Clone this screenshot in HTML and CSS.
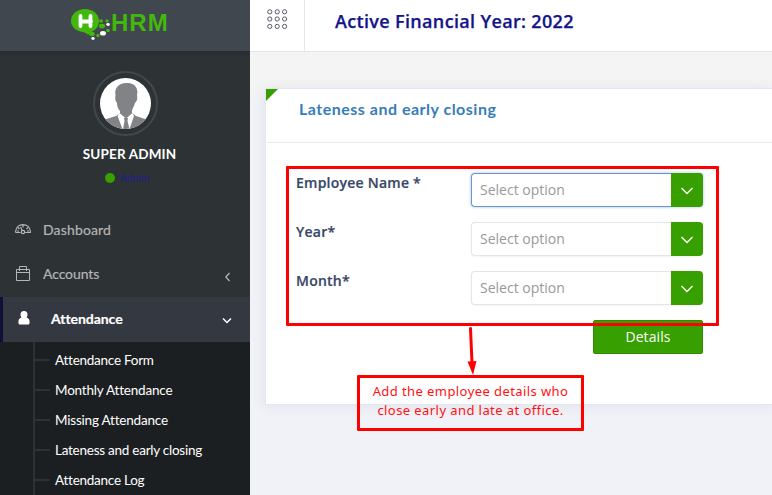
FILE: index.html
```html
<!DOCTYPE html>
<html lang="en">
<head>
<meta charset="utf-8">
<title>HRM</title>
<link rel="stylesheet" href="styles.css">
</head>
<body>
<div class="app">
  <aside class="sidebar">
    <div class="brand">
      <svg class="mark" width="42" height="34" viewBox="0 0 42 34">
        <path d="M15 1C23 1 29 6 29 13C29 18 26 22 21 24L18 27C17 25 15 25 13 24C6 23 1 19 1 13C1 6 7 1 15 1Z" fill="#43b80c"/>
        <path d="M10.5 8V18M20.5 8V18M10.5 13.500H21" stroke="#fff" stroke-width="3.800" stroke-linecap="round" fill="none"/>
        <g fill="#43b80c"><ellipse cx="31" cy="13" rx="2" ry="1.7"/><ellipse cx="37" cy="13" rx="1.7" ry="1.4"/><ellipse cx="32" cy="18" rx="3" ry="2.3"/><ellipse cx="22" cy="26" rx="2.8" ry="2.2"/><circle cx="28" cy="27.500" r="1.7"/><circle cx="38" cy="22.500" r="1.8"/></g>
        <g fill="#fff"><ellipse cx="38" cy="16.500" rx="1.800" ry="1.400"/><ellipse cx="33" cy="25.200" rx="3" ry="2.300"/><ellipse cx="23" cy="30.500" rx="1.700" ry="1.400"/></g>
      </svg>
      <span class="wordmark">HRM</span>
    </div>
    <div class="user">
      <div class="avatar">
        <svg width="51" height="51" viewBox="0 0 51 51">
          <defs><clipPath id="round"><circle cx="25.500" cy="25.500" r="25.500"/></clipPath></defs>
          <g clip-path="url(#round)">
            <rect width="51" height="51" fill="#fff"/>
            <path d="M26 5C34 4 39 10 37 17C38 22 36 24 35 25C34 29 32 31 32 33V35L36 38L51 43V51H0V43L16 38L20 35V33C18 31 17 28 17 25C15 23 15 20 15.500 17C14 10 19 5 26 5Z" fill="#808487"/>
            <path d="M19.500 35L26 40.500L32.500 35L34 38L29.500 51H22.500L17.500 38Z" fill="#fff"/>
            <path d="M24 40H28L27.500 43L29.500 51H23L24.500 43Z" fill="#808487"/>
          </g>
        </svg>
      </div>
      <div class="name">SUPER ADMIN</div>
      <div class="status"><i class="dot"></i><span>Admin</span></div>
    </div>
    <nav>
      <a class="item">
        <svg class="icon dash" width="16" height="16" viewBox="0 0 16 16" fill="none" stroke="#b4b6b7" stroke-width="1.200"><path d="M.6 9.500V8.500C1 4.500 4 1.600 8 1.600S15 4.500 15.400 8.500V9.500H10.200M.6 9.500H5.500M8 2V4.500M3 4.500L4.500 6M13 4.500L11.500 6M2 8H4M12 8H14M5.500 4L7.500 8"/><circle cx="8" cy="9" r="1.700"/></svg>
        <span class="w-dash">Dashboard</span>
      </a>
      <a class="item">
        <svg class="icon" width="16" height="16" viewBox="0 0 16 16" fill="none" stroke="#b4b6b7"><path d="M1.500 3.500H14.500V14.500H1.500ZM1.500 6.500H14.500M4.500 5V.500H11.500V5"/></svg>
        <span class="w-acc">Accounts</span>
        <svg class="chev" width="8" height="10" viewBox="0 0 8 10" fill="none" stroke="#b4b6b7" stroke-width="1.300"><path d="M4.500 1L.800 5L4.500 9"/></svg>
      </a>
      <a class="item active">
        <svg class="icon" width="12" height="14" viewBox="0 0 12 14" fill="#fff"><path d="M6 0C8.500 0 9.500 1.600 9.500 3.500C9.500 5.200 9 6 8.500 6.500C11 7.200 11.600 9 11.600 11C11.600 13 11 13.500 10 13.500H2C1 13.500 .4 13 .4 11C.4 9 1 7.200 3.500 6.500C3 6 2.500 5.200 2.500 3.500C2.500 1.600 3.500 0 6 0Z"/></svg>
        <span class="w-att">Attendance</span>
        <svg class="chev" width="10" height="8" viewBox="0 0 10 8" fill="none" stroke="#fff" stroke-width="1.500"><path d="M1 1.500L5 5.500L9 1.500"/></svg>
      </a>
      <ul class="sub">
        <li class="s1">Attendance Form</li>
        <li class="s2">Monthly Attendance</li>
        <li class="s3">Missing Attendance</li>
        <li class="s4">Lateness and early closing</li>
        <li class="s5">Attendance Log</li>
      </ul>
    </nav>
  </aside>
  <div class="main">
    <header class="top">
      <div class="toggle">
        <svg width="21" height="21" viewBox="0 0 21 21" fill="none" stroke="#5b5868"><g id="r"><circle cx="2.800" cy="2.800" r="2.100"/><circle cx="10.200" cy="2.800" r="2.100"/><circle cx="17.600" cy="2.800" r="2.100"/></g><use href="#r" y="7.200"/><use href="#r" y="14.600"/></svg>
      </div>
      <h1>Active Financial Year: 2022</h1>
    </header>
    <main class="content">
      <section class="card">
        <header class="card-head"><h2>Lateness and early closing</h2></header>
        <div class="form">
          <div class="row"><label>Employee Name *</label><div class="select focus"><span>Select option</span><b><svg width="14" height="10" viewBox="0 0 14 10" fill="none" stroke="#fff" stroke-width="1.400"><path d="M1.500 2L7 7.500L12.500 2"/></svg></b></div></div>
          <div class="row"><label>Year*</label><div class="select"><span>Select option</span><b><svg width="14" height="10" viewBox="0 0 14 10" fill="none" stroke="#fff" stroke-width="1.400"><path d="M1.500 2L7 7.500L12.500 2"/></svg></b></div></div>
          <div class="row"><label>Month*</label><div class="select"><span>Select option</span><b><svg width="14" height="10" viewBox="0 0 14 10" fill="none" stroke="#fff" stroke-width="1.400"><path d="M1.500 2L7 7.500L12.500 2"/></svg></b></div></div>
          <button class="details">Details</button>
        </div>
      </section>
    </main>
  </div>
</div>
<div class="frame"></div>
<svg class="arrow" width="12" height="50" viewBox="0 0 12 50"><path d="M3.500 2.500L5 37" stroke="#f00" stroke-width="3" stroke-linecap="round"/><path d="M.500 35.500L9.500 35L6 49Z" fill="#f00"/></svg>
<div class="note"><span class="n1">Add the employee details who</span><span class="n2">close early and late at office.</span></div>
</body>
</html>
```
FILE: styles.css
```css
* { box-sizing: border-box; }
body { margin: 0; width: 772px; height: 495px; overflow: hidden; background: #f1f2f7; font-family: "Open Sans", sans-serif; }
.app { display: flex; height: 495px; }
.sidebar { width: 250px; flex: none; height: 495px; overflow: hidden; background: #2d3235; font-family: Lato, sans-serif; }
.brand { height: 51px; display: flex; padding: 8px 0 0 70px; background: #40474f; }
.mark { flex: none; }
.wordmark { font: bold 24px/29px "Liberation Sans", sans-serif; color: #43b80c; letter-spacing: 1px; margin-left: -1px; }
.user { height: 158px; padding-top: 20px; display: flex; flex-direction: column; align-items: center; background: linear-gradient(#272b2e, #2d3235 5px); }
.avatar { width: 65px; height: 65px; border: 2px solid #43474b; border-radius: 50%; padding: 5px; }
.avatar svg { display: block; }
.name { margin: 8px 0 0 9px; font-size: 13.5px; line-height: 20px; font-weight: bold; color: #fff; letter-spacing: .15px; white-space: nowrap; }
.status { display: flex; align-items: center; gap: 5px; height: 14px; margin: 7px 0 0 4px; font-size: 10.5px; color: #20208a; letter-spacing: -.1px; }
.dot { width: 10px; height: 10px; border-radius: 50%; background: #37a000; }
.item { display: flex; align-items: center; height: 44px; padding: 0 17px 0 15px; color: #b4b6b7; font-size: 14px; }
.item .icon { flex: none; margin-right: 12px; transform: translateY(-1px); }
.item .dash { transform: translateY(0); }
.item span { white-space: nowrap; line-height: 20px; transform: translateY(-1px); -webkit-text-stroke: .2px; }
.w-dash { letter-spacing: .15px; }
.w-acc { letter-spacing: -.1px; }
.chev { margin-left: auto; transform: translateY(2px); }
.item.active { height: 45px; background: #343840; color: #fff; border-left: 3px solid #110e3b; padding-left: 15px; font-weight: bold; font-size: 14px; }
.item.active .icon { margin-right: 21px; transform: translateY(-2px); }
.item.active .chev { margin-right: 1px; transform: translateY(1px); }
.w-att { letter-spacing: -.05px; }
.sub { margin: 0; padding: 3px 0 0; height: 153px; list-style: none; background: linear-gradient(90deg, transparent 33px, #2d3235 33px, #2d3235 35px, transparent 35px) #1c1f21; color: #fff; font-size: 13.5px; }
.sub li { display: flex; align-items: center; height: 30px; padding-left: 35px; white-space: nowrap; letter-spacing: -.25px; }
.sub .s2, .sub .s3 { letter-spacing: -.2px; }
.sub li::before { content: ""; width: 15px; height: 2px; margin-right: 5px; background: #2d3235; }
.main { flex: 1; min-width: 0; }
.top { height: 52px; display: flex; background: #fff; border-bottom: 1px solid #e1e6ef; }
.toggle { width: 55px; border-right: 1px solid #e1e6ef; padding: 9px 0 0 17px; }
h1 { margin: 8px 0 0 30px; font-size: 18px; line-height: 26px; font-weight: 600; color: #14148a; letter-spacing: .34px; -webkit-text-stroke: .25px; white-space: nowrap; }
.content { height: 443px; padding: 36px 0 0 15px; background: linear-gradient(#f4f4f4 30px, #f1f2f7 55px); }
.card { height: 317px; position: relative; background: #fff; border: 1px solid #e1e6ef; border-right: 0; box-shadow: 0 1px 12px rgba(90,90,150,.1); }
.card::before { content: ""; position: absolute; left: 0; top: 0; border-top: 12px solid #37a000; border-right: 12px solid transparent; }
.card-head { height: 54px; padding: 8px 0 0 33px; border-bottom: 1px solid #e8ebf2; }
h2 { margin: 0; font: bold 16px/24px Lato, sans-serif; color: #377db9; letter-spacing: .5px; white-space: nowrap; }
.form { padding: 30px 0 0 30px; width: 437px; display: flex; flex-direction: column; }
.row { display: flex; height: 34px; margin-bottom: 15px; }
.row label { width: 175px; font-size: 14px; line-height: 20px; font-weight: 600; color: #374767; letter-spacing: .24px; -webkit-text-stroke: .2px; white-space: nowrap; }
.select { width: 232px; height: 34px; display: flex; border: 1px solid #e4e5e7; border-right: 0; border-radius: 4px; color: #999; font-size: 14px; line-height: 32px; box-shadow: 0 1px 2px rgba(0,0,0,.05); }
.select span { flex: 1; padding-left: 8px; }
.select b { width: 32px; height: 34px; margin-top: -1px; background: #37a000; border-radius: 0 4px 4px 0; display: flex; align-items: center; justify-content: center; padding: 2px 1px 0 0; }
.select.focus { border-color: #6f93cf; box-shadow: 0 0 3px rgba(91,136,206,.6); }
.details { align-self: flex-end; width: 110px; height: 34px; padding: 0 0 2px; border: 1px solid #318d01; border-radius: 2px; background: #37a000; color: #fff; font: 14px "Open Sans", sans-serif; letter-spacing: .1px; }
.frame { position: absolute; left: 286px; top: 166px; width: 433px; height: 160px; border: 3px solid #f00; border-radius: 1px; }
.arrow { position: absolute; left: 467px; top: 326px; }
.note { position: absolute; left: 357px; top: 375px; width: 227px; height: 56px; border: 3px solid #f00; border-radius: 1px; padding-top: 4px; display: flex; flex-direction: column; align-items: center; color: #f11; font: 13px/19px "Noto Sans", sans-serif; letter-spacing: .42px; white-space: nowrap; }
```
